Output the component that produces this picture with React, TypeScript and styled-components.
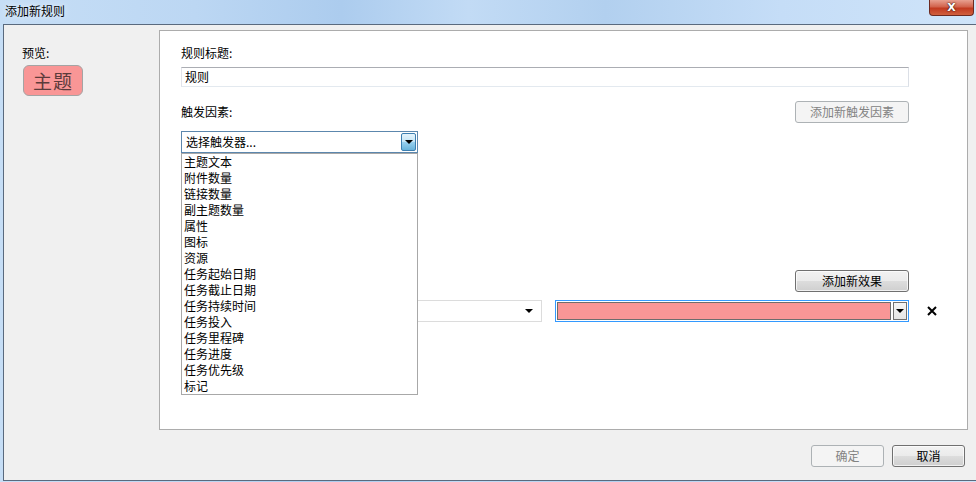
import React from "react";
import styled, { createGlobalStyle } from "styled-components";

const Global = createGlobalStyle`
  html, body { margin: 0; padding: 0; }
  body { width: 976px; height: 482px; overflow: hidden; font-family: "Noto Sans CJK SC", "Noto Sans", sans-serif; font-size: 12px; color: #000; }
  * { box-sizing: border-box; }
`;

const Window = styled.div`
  width: 976px;
  height: 482px;
  display: flex;
  flex-direction: column;
  background: linear-gradient(90deg, #c6def6 0%, #bcd7f3 20%, #acccee 35%, #c2dbf5 48%, #b2d0ef 62%, #c5ddf7 80%, #cfe4f9 100%);
  padding: 0 0 1px 3px;
`;

const TitleBar = styled.div`
  height: 24px;
  display: flex;
  align-items: flex-start;
  justify-content: space-between;
`;

const Title = styled.div`
  padding: 4px 0 0 2px;
  font-size: 12px;
  line-height: 14px;
  color: #000;
  text-shadow: 0 0 6px rgba(255, 255, 255, 0.9);
`;

const CloseButton = styled.div`
  width: 45px;
  height: 16px;
  margin-right: 2px;
  border: 1px solid #6d2a20;
  border-top: none;
  border-radius: 0 0 4px 4px;
  background: linear-gradient(180deg, #e8a090 0%, #d2634d 45%, #c23a20 55%, #d0603e 100%);
  display: flex;
  align-items: center;
  justify-content: center;
  color: #fff;
  font-family: "DejaVu Sans", sans-serif;
  font-weight: bold;
  font-size: 11px;
  line-height: 13px;
  text-shadow: 0 0 2px #3a1a10, 0 0 1px #3a1a10;
`;

const Client = styled.div`
  flex: 1;
  display: flex;
  flex-direction: column;
  background: #f0f0f0;
  border-top: 1px solid #5a6a7e;
  border-left: 1px solid #5a6a7e;
  border-bottom: 1px solid #5a6a7e;
`;

const Body = styled.div`
  flex: 1;
  display: flex;
  padding: 5px 8px 0 0;
`;

const Side = styled.div`
  width: 155px;
  padding: 15px 0 0 18px;
  display: flex;
  flex-direction: column;
`;

const Label = styled.div`
  height: 16px;
  line-height: 16px;
  font-size: 12px;
  white-space: nowrap;
`;

const Preview = styled.div`
  margin: 4px 0 0 1px;
  width: 60px;
  height: 31px;
  background: #f99696;
  border: 1px solid #a4a4a4;
  border-radius: 6px;
  display: flex;
  align-items: center;
  justify-content: center;
  font-size: 19px;
  color: #5c3b3b;
  letter-spacing: 1px;
`;

const Panel = styled.div`
  flex: 1;
  background: #fff;
  border: 1px solid #acacac;
  padding: 14px 58px 0 21px;
  display: flex;
  flex-direction: column;
`;

const TextInput = styled.div`
  margin-top: 6px;
  height: 20px;
  border: 1px solid;
  border-color: #abadb3 #dbdfe6 #e3e9ef #e2e3ea;
  padding: 0 3px;
  line-height: 18px;
`;

const HeaderRow = styled.div<{ $top: number }>`
  margin-top: ${(p) => p.$top}px;
  height: 22px;
  display: flex;
  align-items: center;
  justify-content: space-between;
`;

const Button = styled.div<{ $disabled?: boolean; $w?: number }>`
  width: ${(p) => p.$w ?? 114}px;
  height: 22px;
  border: 1px solid ${(p) => (p.$disabled ? "#adb2b5" : "#707070")};
  border-radius: 3px;
  background: ${(p) =>
    p.$disabled
      ? "#f4f4f4"
      : "linear-gradient(180deg, #f2f2f2 0%, #ebebeb 49%, #dddddd 50%, #cfcfcf 100%)"};
  box-shadow: inset 0 0 0 1px ${(p) => (p.$disabled ? "transparent" : "rgba(255,255,255,0.7)")};
  color: ${(p) => (p.$disabled ? "#838383" : "#000")};
  display: flex;
  align-items: center;
  justify-content: center;
  font-size: 12px;
  line-height: 14px;
`;

const TriggerWrap = styled.div`
  position: relative;
  margin-top: 8px;
  width: 237px;
  height: 22px;
  z-index: 2;
`;

const OpenSelect = styled.div`
  height: 22px;
  border: 1px solid #5c87ad;
  display: flex;
  align-items: stretch;
  padding: 1px;
  background: #fff;
`;

const SelectText = styled.div`
  flex: 1;
  padding-left: 3px;
  line-height: 18px;
  white-space: nowrap;
`;

const BlueArrow = styled.div`
  width: 15px;
  border: 1px solid #3c7fb1;
  border-radius: 2px;
  background: linear-gradient(180deg, #e5f4fc 0%, #c4e5f6 50%, #98d1ef 51%, #68b3db 100%);
  display: flex;
  align-items: center;
  justify-content: center;
`;

const Tri = styled.div`
  width: 0;
  height: 0;
  border-left: 4px solid transparent;
  border-right: 4px solid transparent;
  border-top: 4px solid #000;
`;

const List = styled.div`
  position: absolute;
  top: 22px;
  left: 0;
  width: 237px;
  background: #fff;
  border: 1px solid #a8a8a8;
  display: flex;
  flex-direction: column;
`;

const ListItem = styled.div`
  height: 16px;
  line-height: 16px;
  padding-left: 2px;
  white-space: nowrap;
`;

const EffectRow = styled.div`
  margin-top: 8px;
  margin-right: -45px;
  height: 22px;
  display: flex;
  align-items: center;
`;

const PlainSelect = styled.div`
  flex: 1;
  height: 22px;
  border: 1px solid #dcdcdc;
  display: flex;
  align-items: center;
  justify-content: flex-end;
  padding-right: 8px;
`;

const ColorSelect = styled.div`
  flex: 1;
  margin-left: 13px;
  height: 22px;
  border: 1px solid #3399ff;
  padding: 1px;
  display: flex;
  gap: 2px;
`;

const Swatch = styled.div<{ $c: string }>`
  flex: 1;
  background: ${(p) => p.$c};
  border: 1px solid #6d6d6d;
`;

const GrayArrow = styled.div`
  width: 14px;
  border: 1px solid #707070;
  background: linear-gradient(180deg, #f4f4f4 0%, #e6e6e6 100%);
  display: flex;
  align-items: center;
  justify-content: center;
`;

const Remove = styled.div`
  width: 45px;
  display: flex;
  justify-content: center;
  align-items: center;
`;

const Footer = styled.div`
  height: 50px;
  display: flex;
  justify-content: flex-end;
  align-items: flex-start;
  gap: 8px;
  padding: 15px 11px 0 0;
`;

const triggers = [
  "主题文本",
  "附件数量",
  "链接数量",
  "副主题数量",
  "属性",
  "图标",
  "资源",
  "任务起始日期",
  "任务截止日期",
  "任务持续时间",
  "任务投入",
  "任务里程碑",
  "任务进度",
  "任务优先级",
  "标记",
];

export default function App() {
  return (
    <>
      <Global />
      <Window>
        <TitleBar>
          <Title>添加新规则</Title>
          <CloseButton>X</CloseButton>
        </TitleBar>
        <Client>
          <Body>
            <Side>
              <Label>预览:</Label>
              <Preview>主题</Preview>
            </Side>
            <Panel>
              <Label>规则标题:</Label>
              <TextInput>规则</TextInput>
              <HeaderRow $top={14}>
                <Label>触发因素:</Label>
                <Button $disabled>添加新触发因素</Button>
              </HeaderRow>
              <TriggerWrap>
                <OpenSelect>
                  <SelectText>选择触发器...</SelectText>
                  <BlueArrow>
                    <Tri />
                  </BlueArrow>
                </OpenSelect>
                <List>
                  {triggers.map((t) => (
                    <ListItem key={t}>{t}</ListItem>
                  ))}
                </List>
              </TriggerWrap>
              <HeaderRow $top={117}>
                <span />
                <Button>添加新效果</Button>
              </HeaderRow>
              <EffectRow>
                <PlainSelect>
                  <Tri />
                </PlainSelect>
                <ColorSelect>
                  <Swatch $c="#f99696" />
                  <GrayArrow>
                    <Tri />
                  </GrayArrow>
                </ColorSelect>
                <Remove>
                  <svg width="10" height="10" viewBox="0 0 10 10">
                    <path d="M1 1 L9 9 M9 1 L1 9" stroke="#000" strokeWidth="2" />
                  </svg>
                </Remove>
              </EffectRow>
            </Panel>
          </Body>
          <Footer>
            <Button $disabled $w={73}>确定</Button>
            <Button $w={73}>取消</Button>
          </Footer>
        </Client>
      </Window>
    </>
  );
}
